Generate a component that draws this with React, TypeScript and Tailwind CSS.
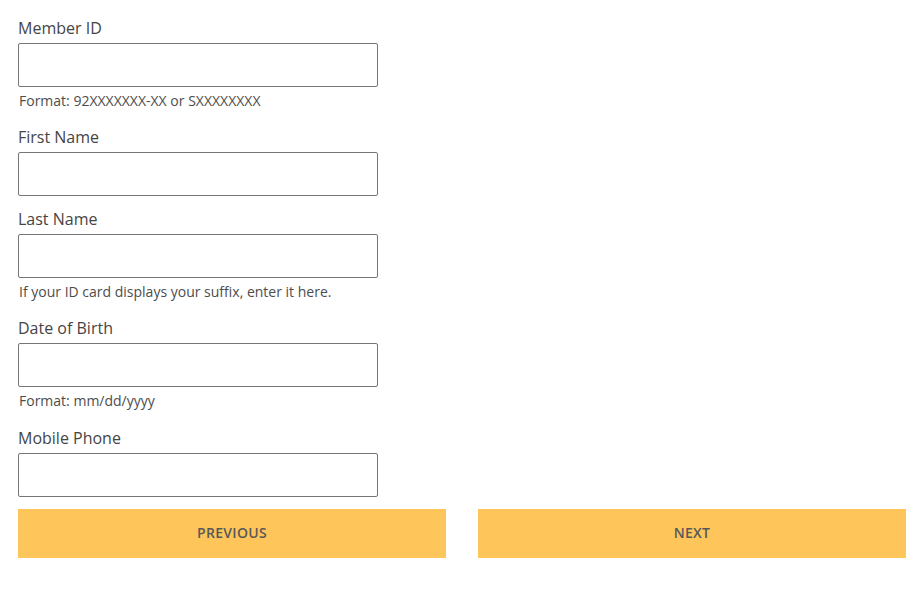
import React from "react";

interface FieldProps {
    label: string;
    help?: string;
    className?: string;
}

const Field: React.FC<FieldProps> = ({ label, help, className = "" }) => {
    return (
        <div className={`flex flex-col w-[360px] mb-[11px] ${className}`}>
            <label className="text-[16px] leading-[24px] text-[#454545]">{label}</label>
            <input
                type="text"
                className="mt-[3px] h-[44px] w-full rounded-[2px] border border-[#767676] bg-white px-2 outline-none"
            />
            {help && (
                <span className="mt-[4px] mb-[3px] pl-[1px] text-[14px] leading-[20px] text-[#4d4d4d]">{help}</span>
            )}
        </div>
    );
};

export default function App() {
    return (
        <div className="flex flex-col min-h-[611px] w-full bg-white pt-[16px] pl-[18px] pr-[13px] font-['Open_Sans',sans-serif]">
            <Field label="Member ID" help="Format: 92XXXXXXX-XX or SXXXXXXXX" />
            <Field label="First Name" />
            <Field label="Last Name" help="If your ID card displays your suffix, enter it here." />
            <Field label="Date of Birth" help="Format: mm/dd/yyyy" />
            <Field label="Mobile Phone" className="mt-[1px]" />
            <div className="flex gap-[32px] mt-[1px]">
                <button className="h-[49px] w-[428px] pb-[2px] bg-[#fec65a] text-[14px] font-semibold uppercase tracking-[0.3px] text-[#585858]">
                    Previous
                </button>
                <button className="h-[49px] w-[428px] pb-[2px] bg-[#fec65a] text-[14px] font-semibold uppercase tracking-[0.3px] text-[#585858]">
                    Next
                </button>
            </div>
        </div>
    );
}
